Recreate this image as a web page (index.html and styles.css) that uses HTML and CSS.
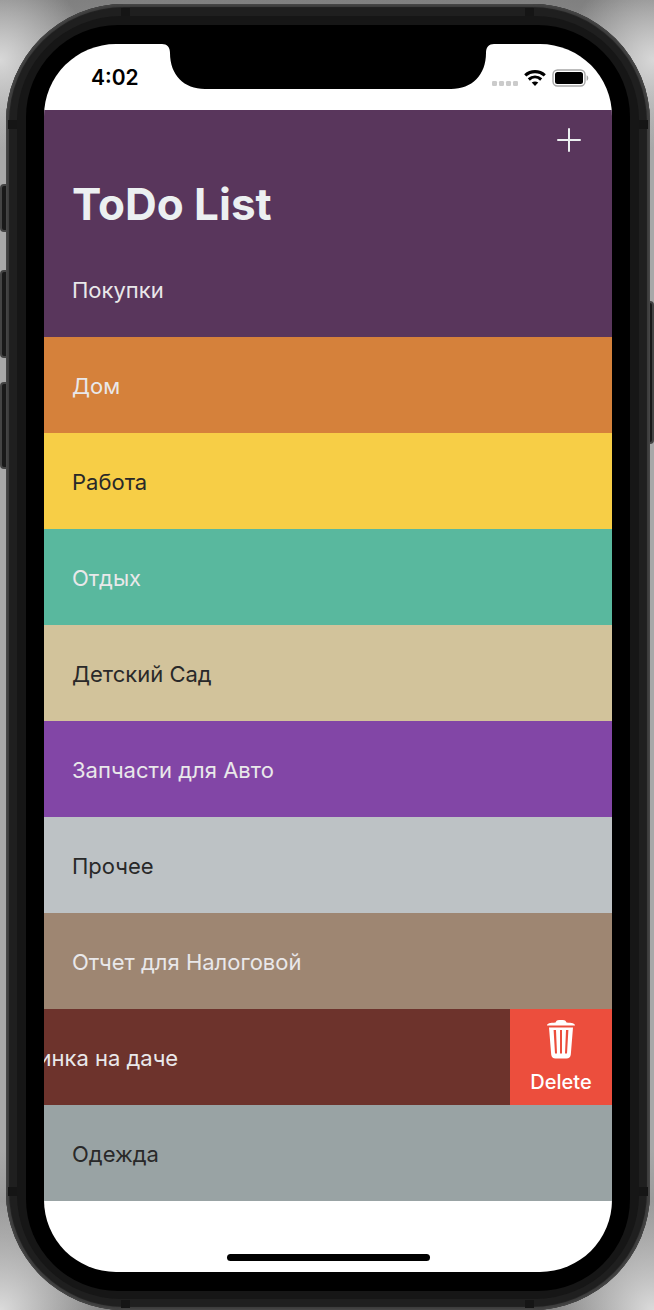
FILE: index.html
```html
<!DOCTYPE html>
<html lang="ru">
<head>
<meta charset="utf-8">
<meta name="viewport" content="width=device-width, initial-scale=1">
<title>ToDo List</title>
<link rel="stylesheet" href="styles.css">
</head>
<body>
<div class="phone">
  <span class="key key-mute"></span>
  <span class="key key-up"></span>
  <span class="key key-down"></span>
  <span class="key key-power"></span>
  <span class="band band-h band-top band-left"></span>
  <span class="band band-h band-top band-right"></span>
  <span class="band band-h band-bottom band-left"></span>
  <span class="band band-h band-bottom band-right"></span>
  <span class="band band-v band-high band-west"></span>
  <span class="band band-v band-high band-east"></span>
  <span class="band band-v band-low band-west"></span>
  <span class="band band-v band-low band-east"></span>
  <div class="rim">
    <div class="bezel">
      <div class="screen">
        <svg class="notch" viewBox="0 0 332 46" aria-hidden="true">
          <path d="M0 0C5 0 8 3 8 9C8 31 22 45 43 45H289C310 45 324 31 324 9C324 3 327 0 332 0Z"/>
        </svg>
        <div class="status">
          <time class="clock">4:02</time>
          <div class="indicators">
            <svg width="26" height="6" viewBox="0 0 26 6" fill="#cbcbcb" aria-hidden="true">
              <rect x="0" width="5" height="5" rx="1.3"/><rect x="7" width="5" height="5" rx="1.3"/><rect x="14" width="5" height="5" rx="1.3"/><rect x="21" width="5" height="5" rx="1.3"/>
            </svg>
            <svg class="wifi" width="22" height="17" viewBox="0 0 22 17" aria-hidden="true">
              <path d="M1.200 5.400C6.800.4 15.200.4 20.800 5.400M4.800 9.500C8.500 6.200 13.500 6.200 17.200 9.500" fill="none" stroke="#000" stroke-width="3.100"/>
              <path d="M7.700 12.600C9.700 11 12.300 11 14.300 12.600L11 16Z"/>
            </svg>
            <svg class="battery" width="37" height="18" viewBox="0 0 37 18" aria-hidden="true">
              <rect x="1" y="1" width="32" height="16" rx="4.500" fill="none" stroke="#a6a6a6" stroke-width="1.400"/>
              <rect x="3" y="3" width="28" height="12" rx="2.500"/>
              <path d="M34.600 6.200C36.800 7 36.800 11 34.600 11.800Z" fill="#a6a6a6"/>
            </svg>
          </div>
        </div>
        <header class="header">
          <div class="toolbar">
            <button class="add" type="button" aria-label="Add">
              <svg width="24" height="24" viewBox="0 0 24 24" aria-hidden="true"><path d="M12 1V23M1 12H23" stroke="#ecf0f1" stroke-width="2" stroke-linecap="round"/></svg>
            </button>
          </div>
          <h1 class="title">ToDo List</h1>
        </header>
        <ul class="list">
          <li class="row plum light">Покупки</li>
          <li class="row orange light">Дом</li>
          <li class="row yellow dark">Работа</li>
          <li class="row mint light">Отдых</li>
          <li class="row sand dark">Детский Сад</li>
          <li class="row violet light">Запчасти для Авто</li>
          <li class="row silver dark">Прочее</li>
          <li class="row brown light">Отчет для Налоговой</li>
          <li class="row maroon light swiped">
            <span class="label">Вечеринка на даче</span>
            <button class="delete" type="button">
              <svg width="28" height="39" viewBox="0 0 28 39" aria-hidden="true">
                <path fill="#fff" fill-rule="evenodd" d="M0 5.500C0 3.500 3 2.800 8.500 2.500C9 .8 10.500 0 12 0H16C17.500 0 19 .8 19.500 2.500C25 2.800 28 3.500 28 5.500ZM2 7.500H26L23.800 34.500C23.500 37 22 38.500 19.500 38.500H8.500C6 38.500 4.500 37 4.200 34.500ZM6.600 10L8 33.500H10L9 10ZM13 10V33.500H15V10ZM19 10L18 33.500H20L21.400 10Z"/>
              </svg>
              <span>Delete</span>
            </button>
          </li>
          <li class="row slate dark">Одежда</li>
        </ul>
        <div class="footer"><span class="home"></span></div>
      </div>
    </div>
  </div>
</div>
</body>
</html>
```
FILE: styles.css
```css
* { box-sizing: border-box; }

body {
  margin: 0;
  padding: 4px 4px 1px 6px;
  overflow-x: hidden;
  font-family: Inter, "Noto Sans", sans-serif;
  background:
    radial-gradient(circle at 0 60px, #d8d8d8, transparent 90px),
    radial-gradient(circle at 100% 60px, #d8d8d8, transparent 90px),
    radial-gradient(circle at 0 100%, #dcdcdc, transparent 110px),
    radial-gradient(circle at 100% 100%, #dcdcdc, transparent 110px),
    linear-gradient(#808080, #a8a8a8 150px, #a8a8a8 1150px, #808080);
}

.phone {
  position: relative;
  padding: 4px 2px 2px;
  border-radius: 118px;
  background: #1f1f1f;
  box-shadow: inset 0 0 0 1px #454545, inset 0 0 1px 3px #404040;
}

.rim {
  margin: 8px 9px 9px;
  padding: 9px 9px 8px;
  border-radius: 104px;
  background: #161616;
}

.bezel {
  padding: 19px 18px;
  border-radius: 92px;
  background: #000;
}

.screen {
  position: relative;
  overflow: hidden;
  border-radius: 72px;
  background: #fff;
}

.key {
  position: absolute;
  z-index: -1;
  left: -6px;
  width: 10px;
  border: 2px solid #444;
  border-radius: 4px;
  background: #191919;
}
.key-mute { top: 180px; height: 48px; }
.key-up { top: 266px; height: 88px; }
.key-down { top: 378px; height: 87px; }
.key-power { top: 297px; right: -4px; left: auto; height: 143px; }

.band { position: absolute; background: #151515; }
.band-h { width: 9px; height: 8px; }
.band-v { width: 9px; height: 9px; }
.band-top { top: 4px; }
.band-bottom { bottom: 2px; }
.band-left { left: 115px; }
.band-right { right: 116px; }
.band-west { left: 2px; }
.band-east { right: 2px; }
.band-high { top: 116px; }
.band-low { bottom: 114px; }

.notch {
  position: absolute;
  top: 0;
  left: 50%;
  width: 332px;
  height: 46px;
  transform: translateX(-50%);
}

.status {
  display: flex;
  justify-content: space-between;
  align-items: center;
  height: 66px;
  padding: 2px 23px 0 47px;
}
.clock { font-size: 21px; font-weight: 600; line-height: 28px; }
.indicators { display: flex; align-items: flex-end; gap: 6px; height: 18px; }
.indicators svg { display: block; }

.header {
  padding: 0 28px;
  background: #59365c;
  color: #ecf0f1;
}
.toolbar { display: flex; justify-content: flex-end; height: 60px; align-items: center; }
.add { display: flex; padding: 3px; border: 0; background: none; }
.title { margin: 0; padding: 2px 0 5px; font-size: 44px; font-weight: 700; line-height: 64px; }

.list { margin: 0; padding: 0; list-style: none; }
.row {
  display: flex;
  align-items: center;
  height: 96px;
  padding: 2px 28px 0;
  font-size: 22px;
  line-height: 32px;
  white-space: nowrap;
}
.light { color: #e9e8ea; }
.dark { color: #292929; }
.plum { background: #59365c; }
.orange { background: #d5813b; }
.yellow { background: #f7ce46; }
.mint { background: #59b89e; }
.sand { background: #d2c39b; }
.violet { background: #8246a6; }
.silver { background: #bdc2c5; }
.brown { background: #9e8672; }
.maroon { background: #6d332c; }
.slate { background: #99a3a4; }

.swiped { padding: 0; overflow: hidden; }
.label { flex: 1; min-width: 0; margin-left: -72px; padding-top: 2px; }
.delete {
  display: flex;
  flex-direction: column;
  align-items: center;
  gap: 9px;
  width: 102px;
  height: 96px;
  padding: 11px 0 0;
  border: 0;
  background: #ec4e3d;
  color: #fff;
  font: 500 20px/28px Inter, "Noto Sans", sans-serif;
}

.footer {
  display: flex;
  justify-content: center;
  align-items: flex-end;
  height: 71px;
  padding-bottom: 11px;
}
.home { width: 203px; height: 7px; border-radius: 4px; background: #000; }
```
